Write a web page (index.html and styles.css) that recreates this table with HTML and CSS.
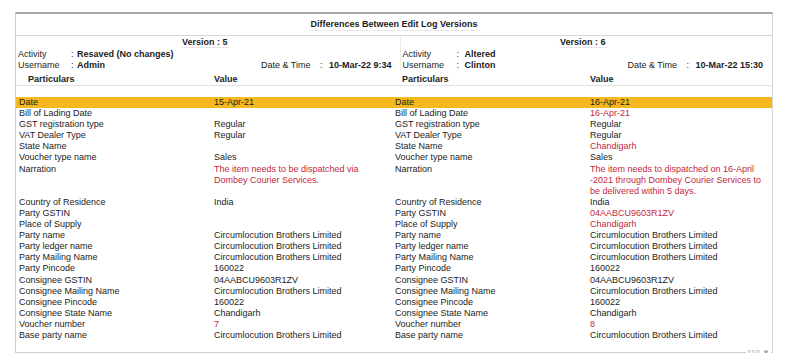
FILE: index.html
```html
<!DOCTYPE html>
<html>
<head>
<meta charset="utf-8">
<link rel="stylesheet" href="styles.css">
</head>
<body>
<div class="frame">
  <div class="title-row"><span class="title">Differences Between Edit Log Versions</span></div>
  <div class="head">
    <div class="half left">
      <div class="ver"><span>Version : 5</span></div>
      <div class="meta"><span class="k">Activity</span><span class="c">:</span><span class="v">Resaved (No changes)</span></div>
      <div class="meta"><span class="k">Username</span><span class="c">:</span><span class="v">Admin</span>
        <span class="dt"><span class="dk">Date &amp; Time</span><span class="dc">:</span><span class="v">10-Mar-22 9:34</span></span></div>
    </div>
    <div class="half right">
      <div class="ver"><span>Version : 6</span></div>
      <div class="meta"><span class="k">Activity</span><span class="c">:</span><span class="v">Altered</span></div>
      <div class="meta"><span class="k">Username</span><span class="c">:</span><span class="v">Clinton</span>
        <span class="dt"><span class="dk">Date &amp; Time</span><span class="dc">:</span><span class="v">10-Mar-22 15:30</span></span></div>
    </div>
  </div>
  <div class="row colhead">
    <div class="p1">Particulars</div><div>Value</div><div class="p2">Particulars</div><div>Value</div>
  </div>
  <div class="row blank"><div></div><div></div><div class="sep"></div><div></div></div>
  <div class="row hl"><div>Date</div><div>15-Apr-21</div><div>Date</div><div>16-Apr-21</div></div>
  <div class="row"><div>Bill of Lading Date</div><div></div><div>Bill of Lading Date</div><div class="red">16-Apr-21</div></div>
  <div class="row"><div>GST registration type</div><div>Regular</div><div>GST registration type</div><div>Regular</div></div>
  <div class="row"><div>VAT Dealer Type</div><div>Regular</div><div>VAT Dealer Type</div><div>Regular</div></div>
  <div class="row"><div>State Name</div><div></div><div>State Name</div><div class="red">Chandigarh</div></div>
  <div class="row"><div>Voucher type name</div><div>Sales</div><div>Voucher type name</div><div>Sales</div></div>
  <div class="row"><div>Narration</div><div class="red">The item needs to be dispatched via<br>Dombey Courier Services.</div><div>Narration</div><div class="red">The item needs to dispatched on 16-April<br>-2021 through Dombey Courier Services to<br>be delivered within 5 days.</div></div>
  <div class="row"><div>Country of Residence</div><div>India</div><div>Country of Residence</div><div>India</div></div>
  <div class="row"><div>Party GSTIN</div><div></div><div>Party GSTIN</div><div class="red">04AABCU9603R1ZV</div></div>
  <div class="row"><div>Place of Supply</div><div></div><div>Place of Supply</div><div class="red">Chandigarh</div></div>
  <div class="row"><div>Party name</div><div>Circumlocution Brothers Limited</div><div>Party name</div><div>Circumlocution Brothers Limited</div></div>
  <div class="row"><div>Party ledger name</div><div>Circumlocution Brothers Limited</div><div>Party ledger name</div><div>Circumlocution Brothers Limited</div></div>
  <div class="row"><div>Party Mailing Name</div><div>Circumlocution Brothers Limited</div><div>Party Mailing Name</div><div>Circumlocution Brothers Limited</div></div>
  <div class="row"><div>Party Pincode</div><div>160022</div><div>Party Pincode</div><div>160022</div></div>
  <div class="row"><div>Consignee GSTIN</div><div>04AABCU9603R1ZV</div><div>Consignee GSTIN</div><div>04AABCU9603R1ZV</div></div>
  <div class="row"><div>Consignee Mailing Name</div><div>Circumlocution Brothers Limited</div><div>Consignee Mailing Name</div><div>Circumlocution Brothers Limited</div></div>
  <div class="row"><div>Consignee Pincode</div><div>160022</div><div>Consignee Pincode</div><div>160022</div></div>
  <div class="row"><div>Consignee State Name</div><div>Chandigarh</div><div>Consignee State Name</div><div>Chandigarh</div></div>
  <div class="row"><div>Voucher number</div><div class="red">7</div><div>Voucher number</div><div class="red">8</div></div>
  <div class="row"><div>Base party name</div><div>Circumlocution Brothers Limited</div><div>Base party name</div><div>Circumlocution Brothers Limited</div></div>
  <div class="foot"><span class="pg">110 &#9660;</span></div>
</div>
</body>
</html>
```

FILE: styles.css
```css
html, body {
  margin: 0;
  padding: 0;
  background: #fff;
}
body {
  font-family: "Liberation Sans", Arial, sans-serif;
  font-size: 9px;
  color: #1c1c1c;
  padding-top: 12px;
  padding-left: 15px;
}
.frame {
  width: 756px;
  height: 338px;
  border-top: 2px solid #a9a9a9;
  border-left: 1px solid #cfcfcf;
  border-right: 1px solid #d6d6d6;
  border-bottom: 1px solid #cfcfcf;
  position: relative;
}
.title-row {
  height: 21px;
  border-bottom: 1px solid #d9d9d9;
  display: flex;
  justify-content: center;
  align-items: center;
}
.title {
  font-weight: bold;
  padding: 0 2px 1px;
  border-bottom: 1px solid #e8e8e8;
  margin-top: 1px;
}
.head {
  display: flex;
}
.half {
  display: flex;
  flex-direction: column;
}
.half.left {
  width: 374px;
  padding-left: 2px;
  padding-right: 9px;
}
.half.right {
  width: 361px;
  padding-left: 1px;
  padding-right: 9px;
  border-left: 1px solid #ececec;
}
.ver {
  height: 13px;
  line-height: 13px;
  text-align: center;
  font-weight: bold;
}
.ver span {
  border-bottom: 1px solid #e6e6e6;
  padding: 0 1px;
}
.meta {
  display: flex;
  height: 11px;
  line-height: 11px;
}
.k {
  width: 53px;
}
.right .k {
  width: 54px;
}
.c {
  width: 6px;
}
.right .c {
  width: 8px;
}
.v {
  font-weight: bold;
}
.dt {
  margin-left: auto;
  display: flex;
}
.dk {
  width: 59px;
}
.dc {
  width: 9px;
}
.row {
  display: grid;
  grid-template-columns: 195px 179px 197px 181px;
  line-height: 11.1px;
  padding-left: 3px;
}
.row > div:nth-child(3) {
  padding-left: 2px;
}
.colhead {
  font-weight: bold;
  padding-top: 2px;
  line-height: 12px;
  border-bottom: 1px solid #e2e2e2;
}
.colhead .p1 {
  padding-left: 9px;
}
.row.colhead > .p2 {
  padding-left: 9px;
}
.blank {
  height: 11px;
}
.hl {
  background: #f6b81f;
}
.red {
  color: #c41f3e;
}
.foot {
  position: absolute;
  right: 1px;
  bottom: -5px;
  color: #a5a5a5;
  font-size: 8px;
  background: #fff;
  padding: 0 1px;
}
```
